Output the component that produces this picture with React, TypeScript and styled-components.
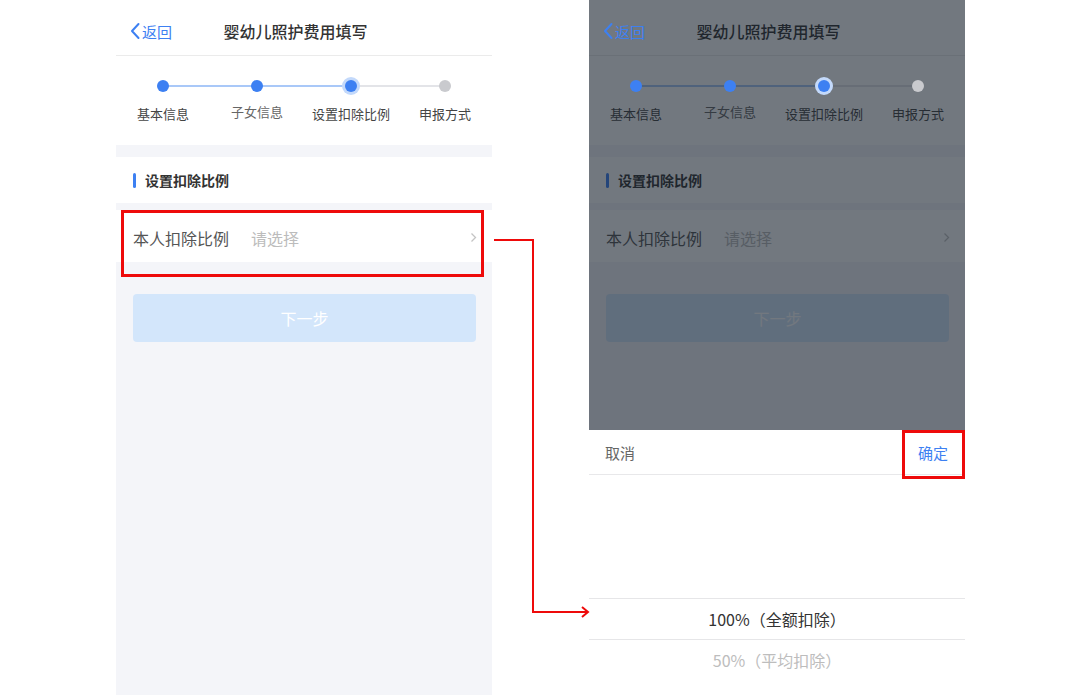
import * as React from 'react';
import styled, { createGlobalStyle } from 'styled-components';

const GlobalStyle = createGlobalStyle`
    html, body {
        margin: 0;
        padding: 0;
        background: #ffffff;
        font-family: "Noto Sans CJK SC", "Noto Sans", sans-serif;
    }
`;

const blue = '#3d80f2';

const Canvas = styled.div`
    position: relative;
    width: 1080px;
    height: 695px;
    overflow: hidden;
    display: flex;
    padding-left: 116px;
    gap: 97px;
    box-sizing: border-box;
`;

const Phone = styled.div`
    position: relative;
    width: 376px;
    height: 695px;
    background: #f4f5f9;
    display: flex;
    flex-direction: column;
    overflow: hidden;
`;

const Header = styled.div`
    height: 56px;
    padding-top: 7px;
    background: #fff;
    border-bottom: 1px solid #ebebeb;
    box-sizing: border-box;
    display: flex;
    align-items: center;
    position: relative;
`;

const Back = styled.div`
    display: flex;
    align-items: center;
    gap: 1px;
    padding-left: 13px;
    color: ${blue};
    font-size: 15px;
    z-index: 1;
`;

const Title = styled.div`
    position: absolute;
    left: 0;
    right: 0;
    text-align: center;
    font-size: 16px;
    font-weight: 500;
    color: #333;
    padding-right: 17px;
`;

const Steps = styled.div`
    background: #fff;
    height: 89px;
    display: grid;
    grid-template-columns: repeat(4, 94px);
    margin-bottom: 12px;
`;

const Step = styled.div<{ $line?: 'blue' | 'gray' }>`
    position: relative;
    display: flex;
    flex-direction: column;
    align-items: center;
    padding-top: 24px;
    &::before {
        content: '';
        display: ${(p) => (p.$line ? 'block' : 'none')};
        position: absolute;
        top: 29px;
        left: 50%;
        width: 94px;
        height: 2px;
        background: ${(p) => (p.$line === 'blue' ? '#a9c8f8' : '#e3e4e8')};
    }
`;

const Dot = styled.div<{ $state: 'done' | 'active' | 'todo' }>`
    position: relative;
    z-index: 1;
    width: 12px;
    height: 12px;
    border-radius: 50%;
    background: ${(p) => (p.$state === 'todo' ? '#c9cace' : blue)};
    box-shadow: ${(p) => (p.$state === 'active' ? '0 0 0 3px #c3d9fb' : 'none')};
`;

const StepLabel = styled.div<{ $dim?: boolean }>`
    margin-top: ${(p) => (p.$dim ? '10px' : '12px')};
    font-size: 13px;
    color: ${(p) => (p.$dim ? '#666' : '#444')};
    white-space: nowrap;
`;

const SectionTitle = styled.div`
    background: #fff;
    height: 46px;
    display: flex;
    align-items: center;
    padding-left: 17px;
    gap: 9px;
    font-size: 14px;
    font-weight: 700;
    color: #333;
    margin-bottom: 7px;
    &::before {
        content: '';
        width: 3px;
        height: 15px;
        border-radius: 2px;
        background: ${blue};
    }
`;

const Row = styled.div`
    background: #fff;
    height: 52px;
    display: flex;
    align-items: center;
    padding: 3px 15px 0 17px;
    box-sizing: border-box;
`;

const RowLabel = styled.div`
    font-size: 16px;
    color: #555;
    width: 118px;
`;

const RowValue = styled.div`
    flex: 1;
    font-size: 16px;
    color: #bcbcbc;
`;

const NextButton = styled.div`
    margin: 32px 16px 0 17px;
    height: 48px;
    border-radius: 4px;
    background: #d3e6fb;
    color: #fff;
    font-size: 16px;
    display: flex;
    align-items: center;
    justify-content: center;
`;

const Mask = styled.div`
    position: absolute;
    inset: 0;
    background: rgba(20, 30, 42, 0.6);
`;

const Sheet = styled.div`
    position: absolute;
    left: 0;
    right: 0;
    top: 430px;
    bottom: 0;
    background: #fff;
    display: flex;
    flex-direction: column;
`;

const SheetHeader = styled.div`
    height: 44px;
    border-bottom: 1px solid #e8e8ea;
    display: flex;
    align-items: center;
    justify-content: space-between;
    padding: 0 17px 0 16px;
    font-size: 15px;
`;

const Cancel = styled.div`
    color: #666;
`;

const Confirm = styled.div`
    color: ${blue};
`;

const Wheel = styled.div`
    padding-top: 123px;
    display: flex;
    flex-direction: column;
`;

const Option = styled.div<{ $selected?: boolean }>`
    height: 40px;
    display: flex;
    align-items: center;
    justify-content: center;
    font-size: 16px;
    color: ${(p) => (p.$selected ? '#333' : '#bdbdbd')};
    border-top: ${(p) => (p.$selected ? '1px solid #e6e6e8' : 'none')};
    border-bottom: ${(p) => (p.$selected ? '1px solid #e6e6e8' : 'none')};
`;

const Highlight = styled.div<{ $x: number; $y: number; $w: number; $h: number }>`
    position: absolute;
    left: ${(p) => p.$x}px;
    top: ${(p) => p.$y}px;
    width: ${(p) => p.$w}px;
    height: ${(p) => p.$h}px;
    border: 3px solid #ee0a0a;
    box-sizing: border-box;
    pointer-events: none;
`;

const Connector = styled.svg`
    position: absolute;
    left: 0;
    top: 0;
    pointer-events: none;
`;

const steps: { label: string; state: 'done' | 'active' | 'todo'; line?: 'blue' | 'gray'; dim?: boolean }[] = [
    { label: '基本信息', state: 'done', line: 'blue' },
    { label: '子女信息', state: 'done', line: 'blue', dim: true },
    { label: '设置扣除比例', state: 'active', line: 'gray' },
    { label: '申报方式', state: 'todo' },
];

const PageContent = () => (
    <>
        <Header>
            <Back>
                <svg width="12" height="18" viewBox="0 0 12 18">
                    <path d="M9.5 2 L3 9 L9.5 16" fill="none" stroke={blue} strokeWidth="2" strokeLinecap="round" strokeLinejoin="round" />
                </svg>
                返回
            </Back>
            <Title>婴幼儿照护费用填写</Title>
        </Header>
        <Steps>
            {steps.map((s) => (
                <Step key={s.label} $line={s.line}>
                    <Dot $state={s.state} />
                    <StepLabel $dim={s.dim}>{s.label}</StepLabel>
                </Step>
            ))}
        </Steps>
        <SectionTitle>设置扣除比例</SectionTitle>
        <Row>
            <RowLabel>本人扣除比例</RowLabel>
            <RowValue>请选择</RowValue>
            <svg width="7" height="11" viewBox="0 0 7 11">
                <path d="M1.5 1.5 L5.5 5.5 L1.5 9.5" fill="none" stroke="#c4c4c4" strokeWidth="1.3" />
            </svg>
        </Row>
        <NextButton>下一步</NextButton>
    </>
);

const App: React.FunctionComponent = () => {
    return (
        <>
            <GlobalStyle />
            <Canvas>
                <Phone>
                    <PageContent />
                </Phone>
                <Phone>
                    <PageContent />
                    <Mask />
                    <Sheet>
                        <SheetHeader>
                            <Cancel>取消</Cancel>
                            <Confirm>确定</Confirm>
                        </SheetHeader>
                        <Wheel>
                            <Option $selected>100%（全额扣除）</Option>
                            <Option>50%（平均扣除）</Option>
                        </Wheel>
                    </Sheet>
                </Phone>
                <Highlight $x={121} $y={210} $w={363} $h={67} />
                <Highlight $x={902} $y={430} $w={63} $h={49} />
                <Connector width="1080" height="695">
                    <path d="M494 240 H533 V612 H587" fill="none" stroke="#ee0a0a" strokeWidth="2" />
                    <path d="M582 607 L588 612 L582 617" fill="none" stroke="#ee0a0a" strokeWidth="2" />
                </Connector>
            </Canvas>
        </>
    );
};

export default App;
